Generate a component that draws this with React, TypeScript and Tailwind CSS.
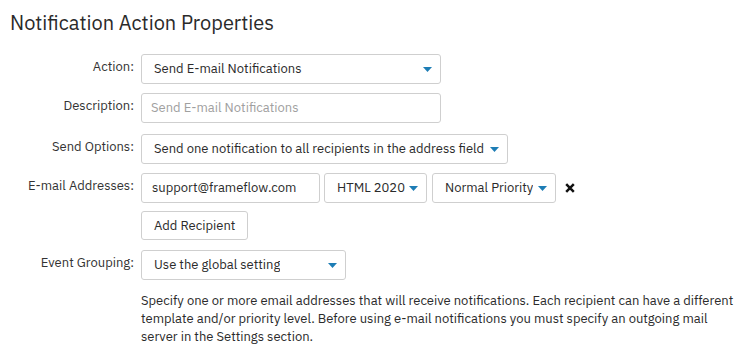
const Caret = () => (
  <svg width="9" height="5" viewBox="0 0 9 5" className="shrink-0">
    <path d="M0 0h9L4.5 5z" fill="#1d7db5" />
  </svg>
);

function Select({ value, width }: { value: string; width: string }) {
  return (
    <div
      className={`${width} h-[30px] flex items-center justify-between pl-[12px] pr-[8px] border border-[#cfcfcf] rounded-[3px] bg-white text-[13px] text-[#2b2b2b]`}
    >
      <span className="truncate">{value}</span>
      <Caret />
    </div>
  );
}

function Row({ label, className = "", children }: { label?: string; className?: string; children: React.ReactNode }) {
  return (
    <div className={`flex items-start gap-[7px] ${className}`}>
      <div className="w-[134px] shrink-0 h-[30px] flex items-center justify-end pb-[5px] text-[13px] text-[#333]">
        {label}
      </div>
      {children}
    </div>
  );
}

export default function App() {
  return (
    <div className="w-[742px] h-[348px] bg-white overflow-hidden font-['IBM_Plex_Sans','Roboto',sans-serif]">
      <h1 className="pl-[10px] pt-[10px] text-[20px] leading-[26px] font-normal text-[#2a2a2a]">
        Notification Action Properties
      </h1>

      <div className="mt-[18px] flex flex-col">
        <Row label="Action:">
          <Select value="Send E-mail Notifications" width="w-[300px]" />
        </Row>

        <Row label="Description:" className="mt-[9px]">
          <div className="w-[300px] h-[30px] flex items-center pl-[9px] border border-[#cfcfcf] rounded-[3px] text-[13px] text-[#a0a0a0]">
            Send E-mail Notifications
          </div>
        </Row>

        <Row label="Send Options:" className="mt-[11px]">
          <Select value="Send one notification to all recipients in the address field" width="w-[367px]" />
        </Row>

        <Row label="E-mail Addresses:" className="mt-[9px]">
          <div className="flex items-center">
            <div className="w-[179px] h-[30px] flex items-center pl-[10px] border border-[#cfcfcf] rounded-[3px] text-[13px] text-[#2b2b2b]">
              support@frameflow.com
            </div>
            <div className="ml-[4px]">
              <Select value="HTML 2020" width="w-[103px]" />
            </div>
            <div className="ml-[5px]">
              <Select value="Normal Priority" width="w-[124px]" />
            </div>
            <svg width="10" height="10" viewBox="0 0 10 10" className="ml-[9px]">
              <path d="M1.2 1.2l7.6 7.6M8.8 1.2L1.2 8.8" stroke="#111" strokeWidth="2.5" />
            </svg>
          </div>
        </Row>

        <Row className="mt-[8px]">
          <button className="h-[29px] px-[12px] border border-[#cfcfcf] rounded-[3px] bg-white text-[13px] text-[#2b2b2b]">
            Add Recipient
          </button>
        </Row>

        <Row label="Event Grouping:" className="mt-[9px]">
          <Select value="Use the global setting" width="w-[205px]" />
        </Row>

        <div className="mt-[12px] pl-[141px] pr-[8px] text-[13px] leading-[18px] text-[#2b2b2b]">
          Specify one or more email addresses that will receive notifications. Each recipient can have a different
          template and/or priority level. Before using e-mail notifications you must specify an outgoing mail
          server in the Settings section.
        </div>
      </div>
    </div>
  );
}
